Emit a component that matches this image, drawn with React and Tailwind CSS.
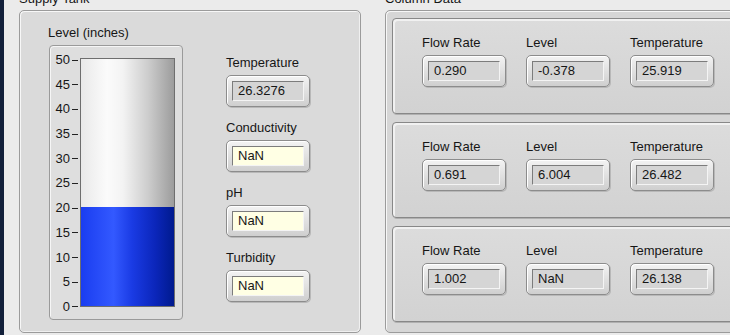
import React from 'react';

// LabVIEW-style front panel: supply tank + column data
const scale = [50, 45, 40, 35, 30, 25, 20, 15, 10, 5, 0];

const columns = [
  { flow: '0.290', level: '-0.378', temp: '25.919' },
  { flow: '0.691', level: '6.004', temp: '26.482' },
  { flow: '1.002', level: 'NaN', temp: '26.138' },
];

function Indicator({ label, value, yellow }) {
  return (
    <div className="flex flex-col gap-[4px]">
      <div className="h-[16px] text-[13px] leading-[16px] text-[#161616]">{label}</div>
      <div className="h-[32px] w-[84px] rounded-[5px] border border-[#8c8c8c] bg-gradient-to-b from-[#f3f3f3] to-[#cfcfcf] p-[5px] shadow-[inset_1px_1px_0_#ffffff,1px_1px_0_#b8b8b8]">
        <div
          className={`h-full border border-b-[#f4f4f4] border-l-[#7c7c7c] border-r-[#f4f4f4] border-t-[#7c7c7c] pl-[5px] text-[13px] leading-[18px] text-[#161616] ${
            yellow ? 'bg-[#ffffe4]' : 'bg-[#d5d5d5]'
          }`}
        >
          {value}
        </div>
      </div>
    </div>
  );
}

function Tank({ level }) {
  const fill = Math.round((level / 50) * 247);
  return (
    <div className="flex h-[275px] w-[134px] rounded-[4px] border border-[#9a9a9a] bg-[#dedede] shadow-[inset_1px_1px_0_#f6f6f6]">
      <div className="mt-[7px] flex h-[261px] w-[30px] flex-col justify-between">
        {scale.map((n) => (
          <div key={n} className="flex h-[14px] items-center justify-end gap-[2px] pr-[2px]">
            <span className="text-[13px] leading-[14px] text-[#161616]">{n}</span>
            <span className="h-[1px] w-[6px] bg-[#222]" />
          </div>
        ))}
      </div>
      <div className="mt-[12px] flex h-[249px] w-[95px] flex-col border border-[#6e6e6e]">
        <div className="flex-1 bg-[linear-gradient(to_right,#e9e9e9_0%,#fbfbfb_28%,#f3f3f3_45%,#cdcdcd_72%,#9c9c9c_100%)]" />
        <div
          className="bg-[linear-gradient(to_right,#1a3df0_0%,#3359ff_35%,#1a3be4_55%,#0b26ba_80%,#001a8e_100%)]"
          style={{ height: fill }}
        />
      </div>
    </div>
  );
}

export default function App() {
  return (
    <div className="flex h-[335px] w-[730px] overflow-hidden bg-[#ebebeb] font-['Liberation_Sans',Arial,sans-serif]">
      <div className="w-[4px] shrink-0 bg-[#12203a]" />

      {/* Supply Tank */}
      <div className="ml-[15px] flex w-[342px] shrink-0 flex-col">
        <div className="-mt-[9px] h-[16px] text-[13px] leading-[16px] text-[#161616]">Supply Tank</div>
        <div className="mt-[3px] flex h-[323px] rounded-[5px] border border-[#9b9b9b] bg-[#dadada] shadow-[inset_1px_1px_0_#f7f7f7,inset_-1px_-1px_0_#f0f0f0]">
          <div className="flex flex-col gap-[4px] pl-[28px] pt-[14px]">
            <div className="h-[16px] text-[13px] leading-[16px] text-[#161616]">Level (inches)</div>
            <div className="ml-[1px]">
              <Tank level={20} />
            </div>
          </div>
          <div className="ml-[43px] flex flex-col gap-[13px] pt-[44px]">
            <Indicator label="Temperature" value="26.3276" />
            <Indicator label="Conductivity" value="NaN" yellow />
            <Indicator label="pH" value="NaN" yellow />
            <Indicator label="Turbidity" value="NaN" yellow />
          </div>
        </div>
      </div>

      {/* Column Data */}
      <div className="ml-[24px] flex w-[420px] shrink-0 flex-col">
        <div className="-mt-[9px] h-[16px] text-[13px] leading-[16px] text-[#161616]">Column Data</div>
        <div className="mt-[3px] flex h-[323px] flex-col gap-[8px] rounded-[5px] border border-[#9b9b9b] bg-[#d6d6d6] pl-[6px] pt-[7px] shadow-[inset_1px_1px_0_#f7f7f7]">
          {columns.map((c, i) => (
            <div
              key={i}
              className="flex h-[96px] w-[400px] gap-[20px] rounded-[4px] border border-[#888888] bg-gradient-to-b from-[#dcdcdc] to-[#d2d2d2] pl-[29px] pt-[16px] shadow-[inset_2px_2px_0_#f1f1f1,1px_1px_0_#b0b0b0]"
            >
              <Indicator label="Flow Rate" value={c.flow} />
              <Indicator label="Level" value={c.level} />
              <Indicator label="Temperature" value={c.temp} />
            </div>
          ))}
        </div>
      </div>
    </div>
  );
}
